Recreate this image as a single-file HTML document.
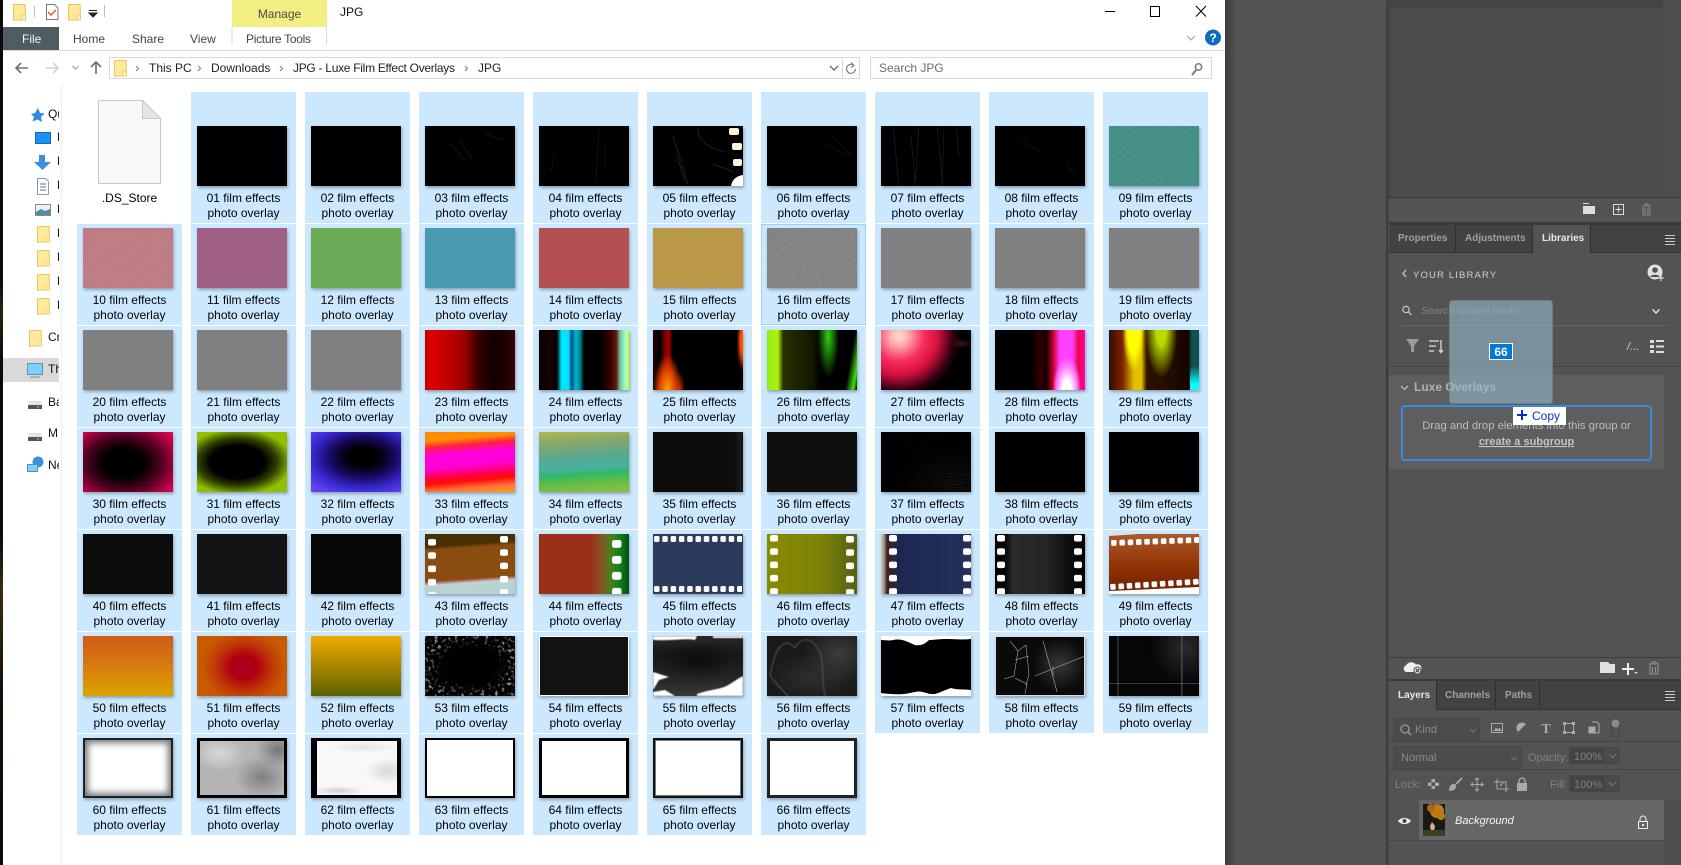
<!DOCTYPE html>
<html lang="en"><head><meta charset="utf-8"><title>JPG</title>
<style>
html,body{margin:0;padding:0;width:1681px;height:865px;overflow:hidden;background:#fff}
body{position:relative;font-family:"Liberation Sans",sans-serif}
#win{position:absolute;left:3px;top:0;width:1222px;height:865px;background:#fff}
#grid{position:absolute;left:77px;top:92px;display:grid;grid-template-columns:repeat(10,105px);column-gap:9px;row-gap:1px;grid-template-rows:131px repeat(6,101px)}
.c{background:#cce8ff;position:relative;box-sizing:border-box;height:100%}
.c.n{background:none}
i{box-shadow:1px 2px 3px rgba(0,0,0,.3)}
.c i{position:absolute;left:6px;top:4px;width:90px;height:60px;display:block;overflow:hidden}
.c.a i{top:34px}
.c p{position:absolute;left:0;right:0;top:69px;margin:0;text-align:center;font-size:12px;line-height:15px;color:#000}
.c.a p{top:99px}
.c i svg{display:block;width:90px;height:60px}
.hov{outline:1px solid #99d1ff;outline-offset:-1px}
#ui{position:absolute;left:0;top:0}
#ui text{font-family:"Liberation Sans",sans-serif}
.k{background:#000}
.g{background:#808080}
.t35{background:linear-gradient(90deg,#0c0c0c 90%,#1c1c1c 97%,#111)}
.t36{background:#0f0f0f}
.t40{background:#0b0b0b}.t41{background:#141414}.t42{background:#070707}
.t23{background:linear-gradient(90deg,#c00000 0,#e00000 8%,#b80000 30%,#9a0000 45%,#3a0000 58%,#140000 75%,#1e0000 90%,#400000)}
.t24{background:linear-gradient(90deg,#000 0,#1a0000 12%,#000 20%,#00e6ff 25%,#00dfff 33%,#064a88 36%,#00b8c8 41%,#008090 46%,#000 50%,#000 68%,#400000 80%,#602010 86%,#70c0a0 90%,#a0ffd0 96%,#d0ff20)}
.t25{background:radial-gradient(ellipse 16% 60% at 16% 100%,#ffa000,#e04000 55%,#0000 100%),radial-gradient(ellipse 7% 32% at 29% 100%,#b03000,#0000),radial-gradient(ellipse 7% 50% at 100% 20%,#ff5000 40%,#0000),linear-gradient(90deg,#200 0,#000 8%,#800 14%,#900 18%,#000 22%,#000)}
.t26{background:radial-gradient(ellipse 12% 70% at 68% 10%,#30d010,#0000),linear-gradient(100deg,#0000 0,#0000 88%,#40e010 96%,#0000),linear-gradient(90deg,#90ee10 0,#b0f010 12%,#283000 18%,#101800 50%,#000 60%,#000)}
.t27{background:radial-gradient(circle 62px at 18px 6px,#ffe0c0 0,#ffb0b0 14%,#f83060 40%,#d81040 62%,#300010 88%,#0000 100%),radial-gradient(ellipse 42% 9% at 68% 22%,#602030,#0000),#000}
.t28{background:radial-gradient(ellipse 16% 55% at 80% 100%,#fff 30%,#ff80ff 70%,#0000),linear-gradient(90deg,#000 0,#000 40%,#300 50%,#100 57%,#d00030 65%,#ff40ff 72%,#ff40ff 86%,#f00040 93%,#ff00c0)}
.t29{background:linear-gradient(#0000 0,#0000 60%,#00ffff 90%) 100% 0/10% 100% no-repeat,radial-gradient(ellipse 18% 80% at 58% 0,#b8dc00 30%,#0000),radial-gradient(ellipse 12% 70% at 27% 0,#ffff00 55%,#0000),linear-gradient(90deg,#301000 0,#802000 15%,#e0c000 28%,#e0c000 36%,#301000 42%,#200c00 70%,#180000 88%,#105050 92%)}
.t30{background:radial-gradient(ellipse 65% 70% at 45% 52%,#000 35%,#500020 65%,#c00048 95%,#f01858 125%)}
.t31{background:radial-gradient(ellipse 55% 50% at 45% 50%,#000 55%,#304000 80%,#90c000 110%),#a0d800}
.t32{background:radial-gradient(ellipse 60% 55% at 58% 42%,#000 28%,#180860 60%,#3828d0 95%,#6040f0 125%),#4030e0}
.t33{background:linear-gradient(175deg,#ff8800 0,#ff9000 14%,#ff2040 24%,#ff00e0 36%,#ff00d0 56%,#ff0040 70%,#ff1000 78%,#ff7040 88%,#ffa000 100%)}
.t34{background:linear-gradient(176deg,#b0b850 0,#8aa868 18%,#58a890 42%,#48b0a0 60%,#30b868 68%,#60bc48 80%,#90c040 100%)}
.t43{background:linear-gradient(176deg,#453000 0,#4a3000 20%,#8a4c10 25%,#8a4c10 72%,#c89090 76%,#b8d4d4 78%,#b8d0d0)}
.t44{background:linear-gradient(90deg,#9a3018 0,#9a3018 58%,#8a5020 68%,#4a8020 80%,#108010 90%,#005018)}
.t45{background:radial-gradient(ellipse 15% 12% at 56% 95%,#70304066,#0000),#2b3b5c}
.t46{background:linear-gradient(90deg,#8a8a00,#7c8208 60%,#556010)}
.t47{background:linear-gradient(90deg,#d0c8b8 0,#a09888 3px,#402020 6px,#1c2850 20%,#24305a 100%)}
.t48{background:linear-gradient(90deg,#000 0,#000 10%,#2a2a2a 20%,#262626 55%,#0c0c0c 85%,#000)}
.t49{background:linear-gradient(#a85a30,#983808 45%,#782400 85%)}
.t50{background:linear-gradient(#d05a18,#d87c10 50%,#d8a400)}
.t51{background:radial-gradient(ellipse 42% 55% at 52% 52%,#a80028 0,#b00010 35%,#c03808 75%,#c85a00 110%),#c85a00}
.t52{background:linear-gradient(#f0aa00,#b08a00 45%,#5a6400)}
.t54{background:#121212;outline:1px solid #fff;outline-offset:-1px}
.t55{background:radial-gradient(ellipse 40% 30% at 50% 40%,#0c0c0c,#0000),linear-gradient(#2a2a2a,#161616 30%,#242424 70%,#3a3a3a)}
.t56{background:radial-gradient(ellipse 40% 50% at 80% 30%,#3c3c3c,#0000),radial-gradient(ellipse 50% 40% at 50% 70%,#2e2e2e,#0000),#1a1a1a}
.t58{background:radial-gradient(ellipse 30% 45% at 72% 48%,#383838,#0000),#0a0a0a;outline:1px solid #ddd;outline-offset:-1px}
.t59{background:linear-gradient(90deg,#0000 9%,#555 10%,#0000 11%,#0000 80%,#666 81%,#0000 82%),linear-gradient(#0000 78%,#666 79%,#0000 80%),radial-gradient(ellipse 40% 60% at 85% 20%,#2a2a2a,#0000),#060606}
.t60{background:#fff;box-shadow:inset 0 0 0 2px #222,inset 0 0 7px 5px #777,1px 2px 3px rgba(0,0,0,.3)}
.t61{background:radial-gradient(ellipse 30% 35% at 72% 65%,#808080,#0000),radial-gradient(ellipse 25% 30% at 90% 20%,#777,#0000),radial-gradient(ellipse 30% 30% at 25% 25%,#d8d8d8,#0000),#b4b4b4;box-shadow:inset 0 0 0 3px #000,1px 2px 3px rgba(0,0,0,.3)}
.t62{background:radial-gradient(ellipse 30% 8% at 30% 88%,#d0d0d0,#0000),radial-gradient(ellipse 25% 22% at 85% 55%,#d8d8d8,#0000),radial-gradient(ellipse 40% 10% at 60% 15%,#e4e4e4,#0000),#f8f8f8;box-shadow:inset 6px 0 0 #000,inset -4px 0 0 #000,inset 0 3px 0 #000,inset 0 -3px 0 #000,1px 2px 3px rgba(0,0,0,.3)}
.t63{background:#fff;box-shadow:inset 0 0 0 2px #000,1px 2px 3px rgba(0,0,0,.3)}
.t64{background:#fff;box-shadow:inset 0 0 0 3px #000,1px 2px 3px rgba(0,0,0,.3)}
.t65{background:#fff;box-shadow:inset 0 0 0 2px #111,inset 0 0 0 3px #777,1px 2px 3px rgba(0,0,0,.3)}
.t66{background:#fff;box-shadow:inset 0 0 0 3px #222,1px 2px 3px rgba(0,0,0,.3)}
</style></head><body>
<svg width="0" height="0" style="position:absolute"><defs>
<filter id="w" x="0" y="0" width="100%" height="100%"><feTurbulence type="fractalNoise" baseFrequency=".3" numOctaves="3" seed="4"/><feColorMatrix values="0 0 0 0 .75 0 0 0 0 .75 0 0 0 0 .75 4 0 0 0 -2.100"/></filter>
<filter id="f" x="0" y="0" width="100%" height="100%"><feTurbulence type="fractalNoise" baseFrequency=".9" numOctaves="2" seed="7"/><feColorMatrix values="0 0 0 0 .5 0 0 0 0 .5 0 0 0 0 .5 1.600 0 0 0 -.7"/></filter>
<filter id="b"><feGaussianBlur stdDeviation=".6"/></filter>
<radialGradient id="eg"><stop offset=".6" stop-color="#000"/><stop offset="1" stop-color="#fff"/></radialGradient>
<mask id="em"><rect width="90" height="60" fill="url(#eg)"/></mask>
<radialGradient id="sg" cx=".8" cy=".85" r=".55"><stop offset="0" stop-color="#fff"/><stop offset="1" stop-color="#222"/></radialGradient>
<mask id="sm"><rect width="90" height="60" fill="url(#sg)"/></mask>
<pattern id="pv" width="9" height="13.300" patternUnits="userSpaceOnUse"><rect width="8" height="6.500" rx="2" fill="#fff"/></pattern>
<pattern id="ph" width="8.300" height="8" patternUnits="userSpaceOnUse"><rect width="5.500" height="6" rx="1.500" fill="#fff"/></pattern>
</defs></svg>
<div style="position:absolute;left:0;top:0;width:3px;height:865px;background:linear-gradient(#0a0a0a 0,#0a0a0a 32%,#2a2410 36%,#0a0a0a 42%,#0a0a0a 62%,#3a2c10 68%,#141008 80%,#0a0a0a)"></div>
<div id="win"></div>
<div id="grid">
<div class="c n a"><p>.DS_Store</p></div>
<div class="c a"><i class="k"></i><p>01 film effects<br>photo overlay</p></div>
<div class="c a"><i class="k"></i><p>02 film effects<br>photo overlay</p></div>
<div class="c a"><i class="k"><svg viewBox="0 0 90 60"><path d="M25 18l15 16M35 15l12 18M60 8l18 6" stroke="#1a1a1a" stroke-width=".7" fill="none"/></svg></i><p>03 film effects<br>photo overlay</p></div>
<div class="c a"><i class="k"><svg viewBox="0 0 90 60"><path d="M60 5l-3 50M66 20v20M15 30l-3 15" stroke="#101010" fill="none"/></svg></i><p>04 film effects<br>photo overlay</p></div>
<div class="c a"><i class="k"><svg viewBox="0 0 90 60"><path d="M20 10l15 48M45 2c0 15 12 20 28 24M60 38c8 4 14 4 20 8M24 30l8 26" stroke="#2a2a2a" stroke-width=".7" fill="none"/><rect x="76" y="2" width="10" height="7" rx="2" fill="#fff0d8"/><rect x="79" y="17" width="10" height="7" rx="2" fill="#fff0d8"/><rect x="80" y="33" width="9" height="7" rx="2" fill="#fff0d8"/><path d="M78 60c1-6 5-10 12-11v11z" fill="#fff"/></svg></i><p>05 film effects<br>photo overlay</p></div>
<div class="c a"><i class="k"><svg viewBox="0 0 90 60"><path d="M55 15l25 15M65 10l20 20" stroke="#101010" stroke-width="1" fill="none"/></svg></i><p>06 film effects<br>photo overlay</p></div>
<div class="c a"><i class="k"><svg viewBox="0 0 90 60"><path d="M12 0l6 60M38 0l-4 60M56 0l6 60M63 5l-2 50M30 10l4 45M75 0l3 30" stroke="#1c1c1c" stroke-width=".8" fill="none"/></svg></i><p>07 film effects<br>photo overlay</p></div>
<div class="c a"><i class="k"><svg viewBox="0 0 90 60"><path d="M25 15l20 10M70 35l10 15" stroke="#101010" fill="none"/></svg></i><p>08 film effects<br>photo overlay</p></div>
<div class="c a"><i style="background:#3f8d84"><svg viewBox="0 0 90 60"><rect width="90" height="60" filter="url(#f)" opacity=".45"/></svg></i><p>09 film effects<br>photo overlay</p></div>
<div class="c"><i style="background:#bf7a82"><svg viewBox="0 0 90 60"><rect width="90" height="60" filter="url(#f)" opacity=".35"/></svg></i><p>10 film effects<br>photo overlay</p></div>
<div class="c"><i style="background:#a06086"></i><p>11 film effects<br>photo overlay</p></div>
<div class="c"><i style="background:#6aac56"></i><p>12 film effects<br>photo overlay</p></div>
<div class="c"><i style="background:#4b9ab4"></i><p>13 film effects<br>photo overlay</p></div>
<div class="c"><i style="background:#b25052"></i><p>14 film effects<br>photo overlay</p></div>
<div class="c"><i style="background:#ba9848"></i><p>15 film effects<br>photo overlay</p></div>
<div class="c hov"><i class="g"><svg viewBox="0 0 90 60"><rect width="90" height="60" filter="url(#f)" opacity=".5"/></svg></i><p>16 film effects<br>photo overlay</p></div>
<div class="c"><i class="g"></i><p>17 film effects<br>photo overlay</p></div>
<div class="c"><i class="g"></i><p>18 film effects<br>photo overlay</p></div>
<div class="c"><i class="g"></i><p>19 film effects<br>photo overlay</p></div>
<div class="c"><i class="g"></i><p>20 film effects<br>photo overlay</p></div>
<div class="c"><i class="g"></i><p>21 film effects<br>photo overlay</p></div>
<div class="c"><i class="g"></i><p>22 film effects<br>photo overlay</p></div>
<div class="c"><i class="t23"></i><p>23 film effects<br>photo overlay</p></div>
<div class="c"><i class="t24"></i><p>24 film effects<br>photo overlay</p></div>
<div class="c"><i class="t25"></i><p>25 film effects<br>photo overlay</p></div>
<div class="c"><i class="t26"></i><p>26 film effects<br>photo overlay</p></div>
<div class="c"><i class="t27"></i><p>27 film effects<br>photo overlay</p></div>
<div class="c"><i class="t28"></i><p>28 film effects<br>photo overlay</p></div>
<div class="c"><i class="t29"></i><p>29 film effects<br>photo overlay</p></div>
<div class="c"><i class="t30"></i><p>30 film effects<br>photo overlay</p></div>
<div class="c"><i class="t31"></i><p>31 film effects<br>photo overlay</p></div>
<div class="c"><i class="t32"></i><p>32 film effects<br>photo overlay</p></div>
<div class="c"><i class="t33"></i><p>33 film effects<br>photo overlay</p></div>
<div class="c"><i class="t34"></i><p>34 film effects<br>photo overlay</p></div>
<div class="c"><i class="t35"></i><p>35 film effects<br>photo overlay</p></div>
<div class="c"><i class="t36"></i><p>36 film effects<br>photo overlay</p></div>
<div class="c"><i class="k"><svg viewBox="0 0 90 60"><rect width="90" height="60" filter="url(#f)" opacity=".5" mask="url(#sm)"/></svg></i><p>37 film effects<br>photo overlay</p></div>
<div class="c"><i class="k"></i><p>38 film effects<br>photo overlay</p></div>
<div class="c"><i class="k"></i><p>39 film effects<br>photo overlay</p></div>
<div class="c"><i class="t40"></i><p>40 film effects<br>photo overlay</p></div>
<div class="c"><i class="t41"></i><p>41 film effects<br>photo overlay</p></div>
<div class="c"><i class="t42"></i><p>42 film effects<br>photo overlay</p></div>
<div class="c"><i class="t43"><svg viewBox="0 0 90 60"><rect transform="translate(3 5)" width="8" height="56" fill="url(#pv)"/><rect transform="translate(75 2)" width="8" height="60" fill="url(#pv)"/></svg></i><p>43 film effects<br>photo overlay</p></div>
<div class="c"><i class="t44"><svg viewBox="0 0 90 60"><rect transform="translate(73 6) scale(1.200)" width="8" height="50" fill="url(#pv)"/></svg></i><p>44 film effects<br>photo overlay</p></div>
<div class="c"><i class="t45"><svg viewBox="0 0 90 60"><rect transform="translate(1 2)" width="88" height="6" fill="url(#ph)"/><rect transform="translate(1 52)" width="88" height="6" fill="url(#ph)"/></svg></i><p>45 film effects<br>photo overlay</p></div>
<div class="c"><i class="t46"><svg viewBox="0 0 90 60"><rect transform="translate(3 1)" width="8" height="60" fill="url(#pv)"/><rect transform="translate(79 2)" width="8" height="60" fill="url(#pv)"/></svg></i><p>46 film effects<br>photo overlay</p></div>
<div class="c"><i class="t47"><svg viewBox="0 0 90 60"><rect transform="translate(8 1)" width="8" height="60" fill="url(#pv)"/><rect transform="translate(82 1)" width="8" height="60" fill="url(#pv)"/></svg></i><p>47 film effects<br>photo overlay</p></div>
<div class="c"><i class="t48"><svg viewBox="0 0 90 60"><rect transform="translate(2 1)" width="8" height="60" fill="url(#pv)"/><rect transform="translate(79 1)" width="8" height="60" fill="url(#pv)"/></svg></i><p>48 film effects<br>photo overlay</p></div>
<div class="c"><i class="t49"><svg viewBox="0 0 90 60"><path d="M0 0h30L0 2z" fill="#e8e0d8"/><rect transform="translate(2 6) rotate(-2)" width="88" height="6" fill="url(#ph)"/><rect transform="translate(1 50) rotate(-3.500)" width="90" height="6" fill="url(#ph)"/><path d="M0 57L90 53V60H0z" fill="#fff"/></svg></i><p>49 film effects<br>photo overlay</p></div>
<div class="c"><i class="t50"></i><p>50 film effects<br>photo overlay</p></div>
<div class="c"><i class="t51"></i><p>51 film effects<br>photo overlay</p></div>
<div class="c"><i class="t52"></i><p>52 film effects<br>photo overlay</p></div>
<div class="c"><i class="k"><svg viewBox="0 0 90 60"><rect width="90" height="60" filter="url(#w)" mask="url(#em)" opacity=".7"/></svg></i><p>53 film effects<br>photo overlay</p></div>
<div class="c"><i class="t54"></i><p>54 film effects<br>photo overlay</p></div>
<div class="c"><i class="t55"><svg viewBox="0 0 90 60"><path d="M0 0h44l-2 4c-10-2-20 1-42 0zM60 0h30v2H60zM0 36l16 5-10 3-6 10zM90 40c-8 4-14 10-22 12-8 2-16 3-24 6v2h46zM0 56l12-2 10 6H0z" fill="#fff" filter="url(#b)"/></svg></i><p>55 film effects<br>photo overlay</p></div>
<div class="c"><i class="t56"><svg viewBox="0 0 90 60"><path d="M3 40C8 10 18 0 28 12c6-12 18-10 22 0 8 6 4 30 8 48M3 40c5 6 10 12 18 20" stroke="#555" fill="none" filter="url(#b)"/></svg></i><p>56 film effects<br>photo overlay</p></div>
<div class="c"><i class="k"><svg viewBox="0 0 90 60"><path d="M0 0h90v3c-12 1-18 0-24 0-10 0-12 1-18 1-4 4-8 6-14 5-6-2-12-7-22-5-4 1-8 0-12 0zM0 60h90v-6c-8-1-14 0-20-2-6 2-12 5-16 6-8 1-12-4-20-2-6 1-12 4-34 1z" fill="#fff"/></svg></i><p>57 film effects<br>photo overlay</p></div>
<div class="c"><i class="t58"><svg viewBox="0 0 90 60"><path d="M15 5l8 10 8-6M23 15l-4 25-10 3M31 9l3 30 -3 10M20 42l12 6 -2 10M48 5l10 36 4 15M40 40l50-20M34 20l-14 4M58 30v10" stroke="#aaa" stroke-width=".6" fill="none"/></svg></i><p>58 film effects<br>photo overlay</p></div>
<div class="c"><i class="t59"></i><p>59 film effects<br>photo overlay</p></div>
<div class="c"><i class="t60"></i><p>60 film effects<br>photo overlay</p></div>
<div class="c"><i class="t61"></i><p>61 film effects<br>photo overlay</p></div>
<div class="c"><i class="t62"></i><p>62 film effects<br>photo overlay</p></div>
<div class="c"><i class="t63"></i><p>63 film effects<br>photo overlay</p></div>
<div class="c"><i class="t64"></i><p>64 film effects<br>photo overlay</p></div>
<div class="c"><i class="t65"></i><p>65 film effects<br>photo overlay</p></div>
<div class="c"><i class="t66"></i><p>66 film effects<br>photo overlay</p></div>
</div>

<svg id="ui" width="1681" height="865" viewBox="0 0 1681 865">
<defs>
<clipPath id="nav"><rect x="3" y="85" width="56" height="400"/></clipPath>
<linearGradient id="sh"><stop offset="0" stop-color="#3e3e3e"/><stop offset="1" stop-color="#535353"/></linearGradient>
<g id="fold"><path d="M.5 .5h11.500l.5 12 -0 3.500H.5z" fill="#ffe99a" stroke="#e8c65a"/><path d="M9 11h3.500v5H9z" fill="#fff3c0" stroke="#e8c65a" stroke-width=".7"/></g>
</defs>

<!-- explorer chrome -->
<rect x="232" y="0" width="95" height="27" fill="#f2ee84"/>
<rect x="3" y="27" width="56" height="23" fill="#4f5d63"/>
<rect x="3" y="50" width="1222" height="1" fill="#dadada"/>
<path d="M232 27v18M326.500 27v18" stroke="#dadada"/>
<use href="#fold" x="13" y="4"/><path d="M34.500 6v11" stroke="#bbb"/>
<path d="M46.500 4.500h8l3.500 3.500v11.500h-11.500z" fill="#fff" stroke="#777"/><path d="M48 12l3 3 5-5" stroke="#e25a1c" stroke-width="1.500" fill="none"/>
<use href="#fold" x="68" y="4"/>
<path d="M89 10.500h8M89 13h8l-4 4z" stroke="#222" fill="#222"/><path d="M104.500 5v12" stroke="#bbb"/>
<g font-size="12" fill="#444">
<text x="279.500" y="18" text-anchor="middle" font-size="12" fill="#4a4a40">Manage</text>
<text x="340" y="16" fill="#111">JPG</text>
<text x="22" y="43" fill="#f4f4f4">File</text>
<text x="73" y="43">Home</text><text x="132" y="43">Share</text><text x="190" y="43">View</text>
<text x="246" y="43" textLength="65">Picture Tools</text>
</g>
<path d="M1105 11.500h10M1150.500 6.500h9v10h-9z" stroke="#000" fill="none"/>
<path d="M1196 6l10 10.500M1206 6l-10 10.500" stroke="#000" fill="none"/>
<path d="M1187 36l4 4 4-4" stroke="#999" fill="none"/>
<circle cx="1213" cy="37.500" r="8" fill="#0a6cc4"/><text x="1213" y="42" text-anchor="middle" font-size="12" font-weight="bold" fill="#fff">?</text>

<!-- nav bar -->
<path d="M28 68H17M21 63l-5 5 5 5" stroke="#6e6e6e" stroke-width="1.600" fill="none"/>
<path d="M46 68h11M53 63l5 5-5 5" stroke="#d0d0d0" stroke-width="1.600" fill="none"/>
<path d="M72.500 66l3 3 3-3" stroke="#9a9a9a" fill="none"/>
<path d="M96 74V62M91 67l5-5 5 5" stroke="#6e6e6e" stroke-width="1.600" fill="none"/>
<rect x="109.500" y="57.500" width="750" height="21" fill="#fff" stroke="#d9d9d9"/>
<use href="#fold" x="114" y="60"/>
<g font-size="12" fill="#222">
<text x="149" y="72">This PC</text><text x="211" y="72">Downloads</text><text x="293" y="72" textLength="162">JPG - Luxe Film Effect Overlays</text><text x="478" y="72">JPG</text>
</g>
<path d="M136 66l2.500 2.500-2.500 2.500M198 66l2.500 2.500-2.500 2.500M280 66l2.500 2.500-2.500 2.500M465 66l2.500 2.500-2.500 2.500" stroke="#888" stroke-width="1.200" fill="none"/>
<path d="M830 66l4 4 4-4" stroke="#555" stroke-width="1.200" fill="none"/><path d="M842.500 58v20" stroke="#d9d9d9"/>
<path d="M854 65.500a4.500 4.500 0 1 0 1.500 3.500M851 62.500l3 3-3 2" stroke="#777" stroke-width="1.100" fill="none"/>
<rect x="870.500" y="57.500" width="341" height="21" fill="#fff" stroke="#d9d9d9"/>
<text x="879" y="72" font-size="12" fill="#6d6d6d">Search JPG</text>
<circle cx="1198.500" cy="67" r="3.200" fill="none" stroke="#777" stroke-width="1.500"/><path d="M1196 70l-4 5" stroke="#777" stroke-width="2"/>

<!-- sidebar -->
<path d="M61.500 85v780" stroke="#efefef"/>
<rect x="3" y="358" width="56" height="24" fill="#d9d9d9"/>
<path d="M38 108l2 5 4.500.5-3.500 3.500 1 5-4.500-2.500-5 2 1.500-4.500-3-3 4-1z" fill="#2d8ce0"/>
<rect x="35.500" y="132.500" width="15" height="11" fill="#1e90f0" stroke="#0f6cc0"/>
<path d="M39 155h6v7h6l-8.500 8-8.500-8h5z" fill="#3b8ee0"/>
<path d="M37.500 178.500h8l3 3v13h-11z" fill="#fff" stroke="#8a9aa8"/><path d="M40 184h6M40 187h6M40 190h6" stroke="#5a7a9a"/>
<rect x="35.500" y="204.500" width="15" height="11" fill="#eef" stroke="#8a8a8a"/><path d="M36 212l5-3 4 2 5-2v6H36z" fill="#4a90a0"/>
<use href="#fold" x="37" y="226"/><use href="#fold" x="37" y="250"/><use href="#fold" x="37" y="274"/><use href="#fold" x="37" y="298"/><use href="#fold" x="29" y="330"/>
<rect x="27.500" y="363.500" width="15" height="11" fill="#7ed0ff" stroke="#6e8ea8"/><path d="M30 377h10" stroke="#9aa6b0" stroke-width="1.500"/>
<path d="M29 401h12l1 5H28z" fill="#e4e4e4"/><rect x="28" y="405" width="14" height="4" fill="#555"/><rect x="37" y="406" width="2" height="2" fill="#3c3"/>
<path d="M29 433h12l1 5H28z" fill="#e4e4e4"/><rect x="28" y="437" width="14" height="4" fill="#555"/><rect x="37" y="438" width="2" height="2" fill="#3c3"/>
<circle cx="38" cy="462" r="5.500" fill="#3d8fd8"/><rect x="27.500" y="464.500" width="10" height="7" fill="#7ed0ff" stroke="#5a90b8"/>
<g clip-path="url(#nav)" font-size="12" fill="#111">
<text x="48" y="118">Qu</text>
<text x="57" y="141">D</text><text x="57" y="165">D</text><text x="57" y="189">D</text><text x="57" y="213">P</text>
<text x="57" y="237">E</text><text x="57" y="261">D</text><text x="57" y="285">P</text><text x="57" y="309">P</text>
<text x="48" y="341">Cr</text><text x="48" y="373">Th</text><text x="48" y="406">Ba</text><text x="48" y="437">M</text><text x="48" y="469">Ne</text>
</g>
<!-- DS_Store icon -->
<path d="M98.500 100.500h44l18 18v65h-62z" fill="#f7f8f8" stroke="#c9c9c9"/><path d="M142.500 100.500v18h18z" fill="#e4e4e4" stroke="#c9c9c9"/>

<!-- Photoshop -->
<rect x="1225" y="0" width="162" height="865" fill="#535353"/>
<rect x="1225" y="0" width="12" height="865" fill="url(#sh)"/>
<rect x="1386" y="0" width="4" height="865" fill="#3c3c3c"/>
<rect x="1388" y="0" width="1" height="865" fill="#4c4c4c"/>
<rect x="1390" y="0" width="291" height="865" fill="#4e4e4e"/>
<rect x="1390" y="0" width="273" height="8" fill="#444"/>
<rect x="1390" y="8" width="273" height="189" fill="#4c4c4c"/>
<rect x="1389" y="197" width="292" height="1" fill="#3a3a3a"/>
<rect x="1389" y="198" width="292" height="24" fill="#535353"/>
<rect x="1389" y="222" width="292" height="3" fill="#3a3a3a"/>
<rect x="1389" y="225" width="292" height="28" fill="#424242"/>
<rect x="1389" y="252" width="292" height="1" fill="#333"/>
<rect x="1533" y="225" width="57" height="29" fill="#535353"/>
<path d="M1455.500 225v27M1532.500 225v27M1590.500 225v27" stroke="#2f2f2f"/>
<rect x="1389" y="253" width="292" height="404" fill="#535353"/>
<g font-size="10" font-weight="bold">
<text x="1398" y="241" fill="#a0a0a0">Properties</text>
<text x="1465" y="241" fill="#a0a0a0">Adjustments</text>
<text x="1542" y="241" fill="#e8e8e8">Libraries</text>
</g>
<path d="M1665 235.500h10M1665 238.500h10M1665 241.500h10M1665 244.500h10" stroke="#ccc"/>
<!-- top panel icons -->
<path d="M1583 203h6v1h-6zM1583 206h12v8h-12z" fill="#ddd"/>
<rect x="1613.500" y="204.500" width="10" height="10" fill="none" stroke="#ddd"/><path d="M1618.500 206.500v6M1615.500 209.500h6" stroke="#ddd"/>
<path d="M1642 206h9M1643 207v8h7v-8M1645 208v6M1648 208v6M1645 206v-2h3v2" stroke="#888" fill="none"/>

<!-- library -->
<path d="M1406 270l-3 3.500 3 3.500" stroke="#ccc" stroke-width="1.300" fill="none"/>
<text x="1413" y="278" font-size="9.500" letter-spacing="1.150" fill="#cfcfcf">YOUR LIBRARY</text>
<circle cx="1655" cy="272" r="7.500" fill="#e0e0e0"/><circle cx="1655" cy="270" r="2.800" fill="#535353"/><path d="M1650 277c1-3 9-3 10 0" fill="#535353"/><path d="M1658 278h6M1661 275v6" stroke="#eee"/>
<circle cx="1406" cy="309.500" r="3.200" fill="none" stroke="#ccc" stroke-width="1.200"/><path d="M1408.500 312l3 3" stroke="#ccc" stroke-width="1.200"/>
<text x="1421" y="314" font-size="10.500" font-style="italic" fill="#838383">Search current library</text>
<path d="M1652.500 309.500l3.500 3.500 3.500-3.500" stroke="#e0e0e0" stroke-width="1.500" fill="none"/>
<rect x="1401" y="325" width="267" height="1" fill="#666"/>
<path d="M1406 339h13l-5 7v6h-3v-6z" fill="#9a9a9a"/>
<path d="M1429 341h10M1429 346h7M1429 351h5M1441 340v12M1439 350l2 2.500 2-2.500" stroke="#ddd" stroke-width="1.300" fill="none"/>
<text x="1627" y="350" font-size="11" font-style="italic" fill="#ddd">/...</text>
<path d="M1650 340h4v3h-4zM1656 340h8v2h-8zM1650 345h4v3h-4zM1656 345.500h8v2h-8zM1650 350h4v3h-4zM1656 351h8v2h-8z" fill="#ddd"/>
<rect x="1389" y="366" width="292" height="1" fill="#444"/>
<rect x="1389" y="375" width="275" height="94" fill="#5e5e5e"/>
<path d="M1401 386l3.500 3.500 3.500-3.500" stroke="#bbb" stroke-width="1.300" fill="none"/>
<text x="1414" y="391" font-size="12" font-weight="bold" fill="#b2b2b2">Luxe Overlays</text>
<rect x="1402" y="406" width="249" height="54" rx="3" fill="none" stroke="#3a8ae0" stroke-width="2"/>
<text x="1526.500" y="429" text-anchor="middle" font-size="11.300" fill="#bcbcbc">Drag and drop elements into this group or</text>
<text x="1526.500" y="445" text-anchor="middle" font-size="11" font-weight="bold" fill="#c4c4c4" text-decoration="underline">create a subgroup</text>
<!-- drag ghost -->
<rect x="1449.500" y="300.500" width="103" height="103" rx="3" fill="#93b8c8" fill-opacity=".62" stroke="#6a7e88"/>
<rect x="1489.500" y="343.500" width="23" height="16" fill="#0078d7" stroke="#fff"/>
<text x="1501" y="356" text-anchor="middle" font-size="12" font-weight="bold" fill="#fff">66</text>
<rect x="1513" y="407" width="53" height="18" fill="#fff"/>
<path d="M1522 410v10M1517 415h10" stroke="#0033cc" stroke-width="2"/>
<text x="1532" y="420" font-size="12" fill="#1030d0">Copy</text>

<!-- lib footer -->
<rect x="1389" y="657" width="292" height="1" fill="#3c3c3c"/>
<rect x="1389" y="658" width="292" height="21" fill="#535353"/>
<rect x="1389" y="679" width="292" height="2" fill="#3a3a3a"/>
<path d="M1406 672a3.500 3.500 0 0 1 0-6.500 6 6 0 0 1 10-1 4 4 0 0 1 3 7.500z" fill="#f0f0f0"/><circle cx="1417.500" cy="670.500" r="3.500" fill="#ddd" stroke="#535353"/><path d="M1416 669l3 3M1419 669l-3 3" stroke="#333"/>
<path d="M1600 662h8l2 2h5v9h-15z" fill="#e0e0e0"/>
<path d="M1628 663v12M1622 669h12" stroke="#f0f0f0" stroke-width="2"/><path d="M1634 672h4l-2 2z" fill="#ddd"/>
<path d="M1649 664h10M1650 665v9h8v-9M1652.500 667v6M1655.500 667v6M1652 664v-2h4v2" stroke="#999" fill="none"/>

<!-- layers -->
<rect x="1389" y="681" width="292" height="28" fill="#424242"/>
<rect x="1389" y="681" width="47" height="29" fill="#535353"/>
<path d="M1436.500 681v28M1495.500 681v28M1539.500 681v28" stroke="#2f2f2f"/><path d="M1436 709.500h245" stroke="#333"/>
<g font-size="10" font-weight="bold">
<text x="1398" y="698" fill="#e8e8e8">Layers</text>
<text x="1445" y="698" fill="#a0a0a0">Channels</text>
<text x="1505" y="698" fill="#a0a0a0">Paths</text>
</g>
<path d="M1665 691.500h10M1665 694.500h10M1665 697.500h10M1665 700.500h10" stroke="#ccc"/>
<rect x="1389" y="710" width="292" height="155" fill="#535353"/>
<rect x="1664" y="800" width="17" height="65" fill="#4e4e4e"/>
<rect x="1393.500" y="718.500" width="86" height="22" rx="3" fill="#4c4c4c" stroke="#474747"/>
<circle cx="1405" cy="729" r="4" fill="none" stroke="#999" stroke-width="1.300"/><path d="M1408 732l3 3" stroke="#999" stroke-width="1.300"/>
<text x="1415" y="733" font-size="11" fill="#8a8a8a">Kind</text>
<path d="M1470 729l3 3 3-3" stroke="#777" fill="none"/>
<rect x="1491.500" y="723.500" width="11" height="9" fill="none" stroke="#aaa"/><path d="M1493 731l3-3 2 1 2-1 1.500 3z" fill="#aaa"/>
<circle cx="1522" cy="728" r="5.500" fill="#aaa"/><path d="M1518 732l8-8a5.500 5.500 0 0 1-8 8z" fill="#535353"/>
<text x="1546" y="733" text-anchor="middle" font-size="14" font-weight="bold" fill="#aaa" style="font-family:'Liberation Serif',serif">T</text>
<rect x="1564.500" y="723.500" width="9" height="9" fill="none" stroke="#aaa"/><path d="M1563 722h3v3h-3zM1572 722h3v3h-3zM1563 731h3v3h-3zM1572 731h3v3h-3z" fill="#aaa"/>
<path d="M1592 722h5l2 2v9h-5M1589 727h6v6h-6z" stroke="#aaa" fill="none"/><rect x="1589" y="727" width="6" height="6" fill="#aaa"/>
<rect x="1611.500" y="720.500" width="8" height="16" rx="4" fill="none" stroke="#444"/><circle cx="1615.500" cy="723.500" r="4" fill="#8a8a8a"/>
<rect x="1389" y="741" width="292" height="1" fill="#444"/>
<rect x="1393.500" y="746.500" width="128" height="22" rx="3" fill="#4c4c4c" stroke="#474747"/>
<text x="1401" y="761" font-size="11" fill="#8a8a8a">Normal</text>
<path d="M1511 757l3 3 3-3" stroke="#777" fill="none"/>
<text x="1528" y="761" font-size="11" fill="#808080">Opacity:</text>
<rect x="1569.500" y="747.500" width="50" height="16" rx="2" fill="#4a4a4a" stroke="#474747"/><rect x="1570" y="748" width="34" height="15" fill="#444"/>
<text x="1574" y="760" font-size="11" fill="#808080">100%</text><path d="M1609 754l3.500 3.500 3.500-3.500" stroke="#777" fill="none"/>
<rect x="1389" y="769" width="292" height="1" fill="#444"/>
<text x="1395" y="788" font-size="11" fill="#808080">Lock:</text>
<rect x="1428" y="779" width="11" height="10" fill="#aaa"/><path d="M1428 779h3.500v3.500H1428zM1435 779h4v3.500h-4zM1431.500 782.500h3.500v3.500h-3.500zM1428 786h3.500v3H1428zM1435 786h4v3h-4z" fill="#535353"/>
<path d="M1462 778l-6 6M1450 790c0-3 2-6 5-5 1 3-2 5-5 5z" stroke="#aaa" stroke-width="1.800" fill="#aaa"/>
<path d="M1477 778v13M1471 784.500h13M1475 780l2-2 2 2M1475 789l2 2 2-2M1473 782.500l-2 2 2 2M1481 782.500l2 2-2 2" stroke="#aaa" fill="none"/>
<path d="M1494 782h12v10M1497 779v10h12M1503 783l-3 3" stroke="#aaa" fill="none"/>
<rect x="1517" y="783" width="10" height="8" fill="#aaa"/><path d="M1519 783v-2a3 3 0 0 1 6 0v2" stroke="#aaa" stroke-width="1.300" fill="none"/>
<text x="1550" y="788" font-size="11" fill="#808080">Fill:</text>
<rect x="1569.500" y="775.500" width="50" height="16" rx="2" fill="#4a4a4a" stroke="#474747"/><rect x="1570" y="776" width="34" height="15" fill="#444"/>
<text x="1574" y="788" font-size="11" fill="#808080">100%</text><path d="M1609 782l3.500 3.500 3.500-3.500" stroke="#777" fill="none"/>
<rect x="1419" y="800" width="245" height="40" fill="#666"/>
<rect x="1389" y="840" width="275" height="1" fill="#4a4a4a"/>
<path d="M1398 821c3-4 10-4 13 0-3 4-10 4-13 0z" fill="#eee"/><circle cx="1404.500" cy="821" r="2" fill="#444"/>
<rect x="1423" y="804" width="22" height="32" fill="#1a1a10"/>
<circle cx="1437" cy="811" r="7" fill="#c07a18"/><circle cx="1431" cy="808" r="4" fill="#a86a10"/><circle cx="1441" cy="816" r="4" fill="#b08010"/>
<path d="M1432 822l3 4-1 6-3-1-1-5z" fill="#e0a8a8"/><rect x="1423" y="830" width="22" height="6" fill="#3a4020"/>
<text x="1455" y="824" font-size="11" font-style="italic" fill="#f4f4f4">Background</text>
<rect x="1638.500" y="821.500" width="9" height="7" fill="none" stroke="#eee"/><path d="M1640 821v-2a3 3 0 0 1 6 0v2" stroke="#eee" fill="none"/><rect x="1642" y="824" width="2" height="2" fill="#eee"/>
</svg>
</body></html>
